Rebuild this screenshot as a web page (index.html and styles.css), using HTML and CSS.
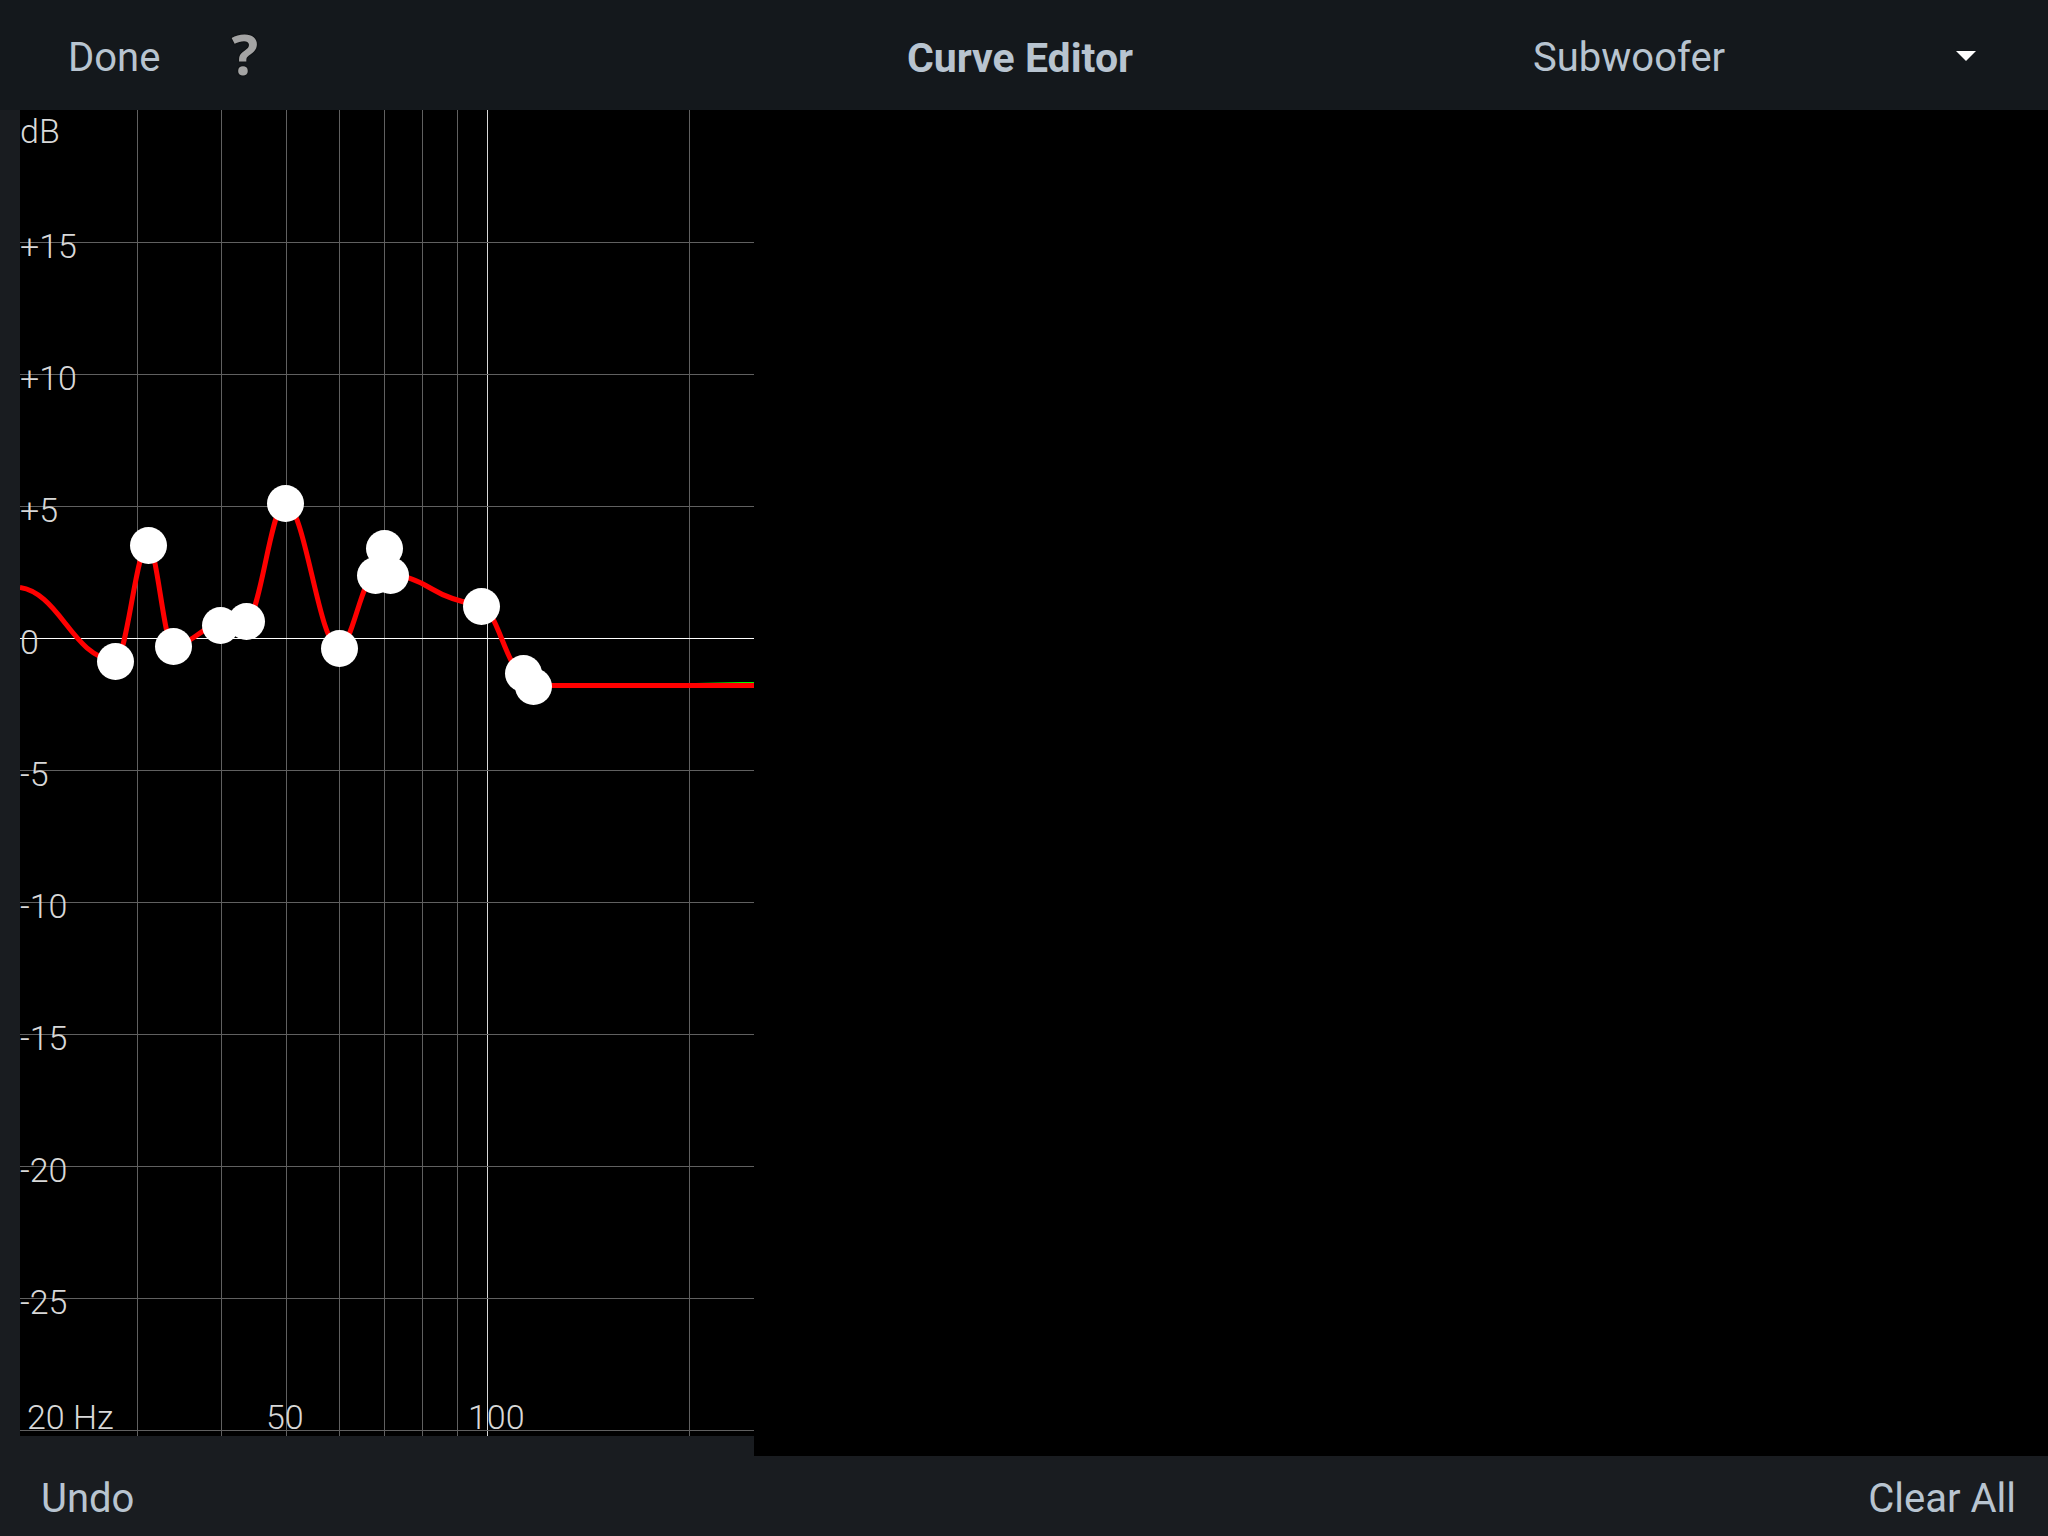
FILE: index.html
```html
<!DOCTYPE html>
<html lang="en">

<head>
    <meta charset="UTF-8">
    <meta name="viewport" content="width=device-width, initial-scale=1.0">
    <title>Curve Editor</title>
    <link rel="stylesheet" href="styles.css">
</head>

<body>
    <header class="toolbar">
        <div class="toolbar-left">
            <button type="button">Done</button>
            <button type="button" class="help" aria-label="Help">?</button>
        </div>
        <h1>Curve Editor</h1>
        <div class="channel">
            <select id="channel" aria-label="Channel">
                <option>Subwoofer</option>
            </select>
            <svg class="caret" width="20" height="10" viewBox="0 0 20 10" aria-hidden="true">
                <path d="M0 0H20L10 10Z"/>
            </svg>
        </div>
    </header>

    <main class="editor">
        <div class="chart-panel">
            <svg class="chart" viewBox="0 0 734 1326" role="img" aria-label="Target curve">
                <!-- frequency lines -->
                <path class="grid" d="M117.5 0V1326M201.5 0V1326M266.5 0V1326M319.5 0V1326M364.5 0V1326M402.5 0V1326M437.5 0V1326M669.5 0V1326"/>
                <path class="grid grid-hundred" d="M467.5 0V1326"/>
                <!-- level lines, 5 dB apart -->
                <path class="grid" d="M0 132.5H734M0 264.5H734M0 396.5H734M0 660.5H734M0 792.5H734M0 924.5H734M0 1056.5H734M0 1188.5H734M0 1320.5H734"/>
                <path class="grid grid-zero" d="M0 528.5H734"/>

                <g class="labels">
                    <text x="0" y="33">dB</text>
                    <text x="0" y="148">+15</text>
                    <text x="0" y="280">+10</text>
                    <text x="0" y="412">+5</text>
                    <text x="0" y="544">0</text>
                    <text x="0" y="676">-5</text>
                    <text x="0" y="808">-10</text>
                    <text x="0" y="940">-15</text>
                    <text x="0" y="1072">-20</text>
                    <text x="0" y="1204">-25</text>
                    <text x="7" y="1319">20 Hz</text>
                    <text x="246" y="1319">50</text>
                    <text x="448" y="1319">100</text>
                </g>

                <path class="curve-auto" d="M676 575.5L722 574.5H734"/>
                <path class="curve" d="M0 477.5C18 480 31 495 45 513S72 548 95 551C107 551 116 435 128 435C137 435 144 536 153 536C170 536 183 515 200 515C209 515 217 511 226 511C240 511 251 393 265 393C285 393 299 538 319 538C332 538 342 465 355 465C358 465 361 438 364 438C366 438 368 465 370 465C385 465 399 471 412 479S440 492 461 496C476 496 488 563 503 563C507 563 509 575.5 513 575.5H734"/>

                <g class="points">
                    <circle cx="95.5" cy="551.5" r="18.5"/>
                    <circle cx="128.5" cy="435.5" r="18.5"/>
                    <circle cx="153.5" cy="536.5" r="18.5"/>
                    <circle cx="200.5" cy="515.5" r="18.5"/>
                    <circle cx="226.5" cy="511.5" r="18.5"/>
                    <circle cx="265.5" cy="393.5" r="18.5"/>
                    <circle cx="319.5" cy="538.5" r="18.5"/>
                    <circle cx="355.5" cy="465.5" r="18.5"/>
                    <circle cx="364.5" cy="438.5" r="18.5"/>
                    <circle cx="370.5" cy="465.5" r="18.5"/>
                    <circle cx="461.5" cy="496.5" r="18.5"/>
                    <circle cx="503.5" cy="563.5" r="18.5"/>
                    <circle cx="513.5" cy="576.5" r="18.5"/>
                </g>
            </svg>
        </div>
    </main>

    <footer class="actions">
        <button type="button">Undo</button>
        <button type="button">Clear All</button>
    </footer>
</body>

</html>
```

FILE: styles.css
```css
* {
    box-sizing: border-box;
}

body {
    margin: 0;
    height: 100vh;
    display: flex;
    flex-direction: column;
    background: #000;
    color: #b8c4d0;
    font-family: Roboto, sans-serif;
    font-size: 40px;
    line-height: 48px;
}

button,
select {
    padding: 0;
    border: 0;
    background: none;
    color: inherit;
    font: inherit;
    cursor: pointer;
}

.toolbar {
    flex: none;
    height: 110px;
    padding: 6px 8px 0 0;
    display: grid;
    grid-template-columns: 1fr auto 1fr;
    align-items: center;
    background: #14181c;
}

.toolbar-left {
    display: flex;
    align-items: center;
    gap: 71px;
    padding-left: 68px;
}

.help {
    padding-bottom: 10px;
    color: #a4a4a4;
    font-family: "Open Sans", sans-serif;
    font-size: 56px;
    font-weight: 700;
    text-shadow: 0 0 2px #000;
}

h1 {
    margin: 0;
    font-size: 41px;
    font-weight: 700;
}

.channel {
    position: relative;
    justify-self: end;
    width: 25vw;
}

.channel select {
    display: block;
    width: 100%;
    padding-left: 5px;
    appearance: none;
}

.channel option {
    background: #14181c;
}

.caret {
    position: absolute;
    top: 17px;
    right: 64px;
    fill: #fff;
    pointer-events: none;
}

.editor {
    flex: 1;
    min-height: 0;
    display: flex;
}

.chart-panel {
    padding: 0 0 20px 20px;
    background: #191c20;
}

.chart {
    display: block;
    height: 100%;
    background: #000;
}

.grid {
    fill: none;
    stroke: #606060;
    stroke-width: 1;
    shape-rendering: crispEdges;
}

.grid-hundred {
    stroke: #d8d8d8;
}

.grid-zero {
    stroke: #fff;
}

.labels {
    fill: #d8d8d8;
    font-size: 34px;
    font-weight: 300;
}

.curve,
.curve-auto {
    fill: none;
    stroke: #f00;
    stroke-width: 5;
}

.curve-auto {
    stroke: #0f0;
}

.points {
    fill: #fff;
}

.actions {
    flex: none;
    height: 80px;
    padding: 6px 32px 0 41px;
    display: flex;
    align-items: center;
    justify-content: space-between;
    background: #191c20;
}
```
